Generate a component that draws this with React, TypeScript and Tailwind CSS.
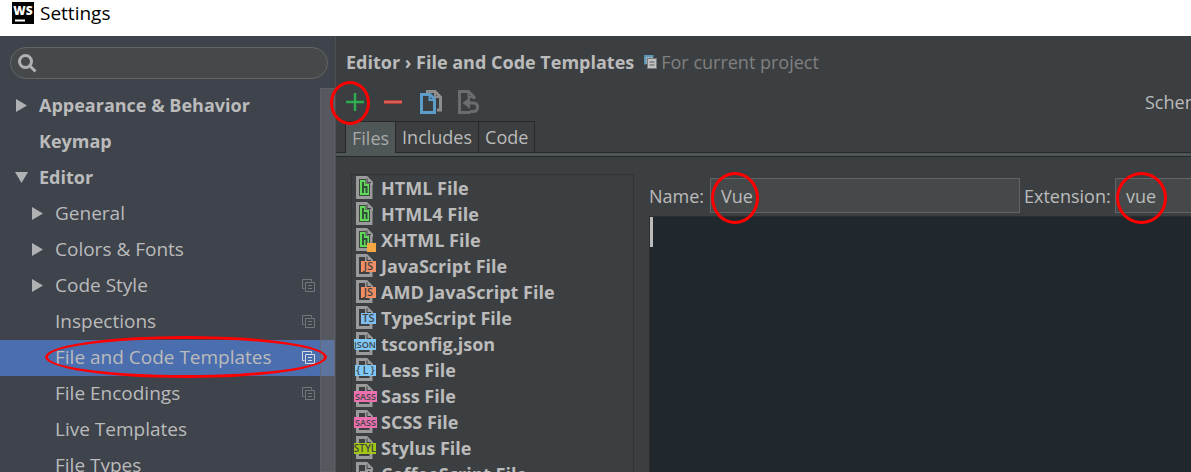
import { useState } from "react";

type Node = {
  label: string;
  top?: boolean;
  open?: boolean;
  branch?: boolean;
  project?: boolean;
};

const nodes: Node[] = [
  { label: "Appearance & Behavior", top: true, branch: true },
  { label: "Keymap", top: true },
  { label: "Editor", top: true, branch: true, open: true },
  { label: "General", branch: true },
  { label: "Colors & Fonts", branch: true },
  { label: "Code Style", branch: true, project: true },
  { label: "Inspections", project: true },
  { label: "File and Code Templates", project: true },
  { label: "File Encodings", project: true },
  { label: "Live Templates" },
  { label: "File Types" },
];

type Kind = "html" | "xhtml" | "js" | "ts" | "json" | "less" | "sass" | "styl" | "coffee";

const files: { name: string; kind: Kind }[] = [
  { name: "HTML File", kind: "html" },
  { name: "HTML4 File", kind: "html" },
  { name: "XHTML File", kind: "xhtml" },
  { name: "JavaScript File", kind: "js" },
  { name: "AMD JavaScript File", kind: "js" },
  { name: "TypeScript File", kind: "ts" },
  { name: "tsconfig.json", kind: "json" },
  { name: "Less File", kind: "less" },
  { name: "Sass File", kind: "sass" },
  { name: "SCSS File", kind: "sass" },
  { name: "Stylus File", kind: "styl" },
  { name: "CoffeeScript File", kind: "coffee" },
];

const badges: Partial<Record<Kind, { text: string; x: number; w: number; fill: string; size: number }>> = {
  js: { text: "JS", x: 7, w: 15, fill: "#f08d62", size: 11 },
  ts: { text: "TS", x: 7, w: 15, fill: "#7ebff0", size: 11 },
  json: { text: "JSON", x: 0, w: 22, fill: "#7fc8f8", size: 9 },
  less: { text: "{ L }", x: 1, w: 21, fill: "#7fc8f8", size: 10 },
  sass: { text: "SASS", x: 0, w: 23, fill: "#ec6fae", size: 9 },
  styl: { text: "STYL", x: 0, w: 22, fill: "#a4c614", size: 10 },
};

function FileIcon({ kind }: { kind: Kind }) {
  const badge = badges[kind];
  return (
    <svg width="23" height="24" viewBox="0 1 23 24" className="shrink-0" aria-hidden="true">
      <path d="M3.5 2.5H12L17 7.5V22.500H3.5Z" fill="none" stroke="#9a9a9a" strokeWidth="3" />
      <path d="M11 1H13L19 7V10H11Z" fill="#9a9a9a" />
      <path d="M13 3.5V7.5H17" fill="none" stroke="#3c3f41" strokeWidth="1" />
      {(kind === "html" || kind === "xhtml") && (
        <>
          <path d="M5 4H12V8.500H16V21H5Z" fill="#3a4a3d" />
          <path d="M6 5H11.500V9H15V20H6Z" fill="#62d85b" />
          <path d="M9 7V18M9 12H12.500V18" fill="none" stroke="#31503a" strokeWidth="2" />
        </>
      )}
      {kind === "xhtml" && <rect x="13" y="16" width="9" height="9" fill="#f4a742" />}
      {kind === "coffee" && <path d="M6 10H14V17H6Z" fill="#9a9a9a" />}
      {badge && (
        <>
          <rect x={badge.x} y="8" width={badge.w} height="11" fill={badge.fill} />
          <text
            x={badge.x + badge.w / 2}
            y="17"
            textAnchor="middle"
            fontSize={badge.size}
            fontWeight="600"
            fill="#3f4547"
            fontFamily="Liberation Sans Narrow, Open Sans, sans-serif"
          >
            {badge.text}
          </text>
        </>
      )}
    </svg>
  );
}

function ProjectIcon({ className }: { className: string }) {
  return (
    <svg width="13" height="13" viewBox="0 0 13 13" className={className} fill="none" stroke="currentColor" aria-hidden="true">
      <path d="M2.500 9.500H.5V.5H9.500V2.500" />
      <path d="M3.500 3.500H12.500V12.500H3.500Z M6 6.500H10 M6 9.500H10" />
    </svg>
  );
}

function Arrow({ open }: { open?: boolean }) {
  return (
    <svg width="13" height="13" viewBox="0 0 13 13" fill="#afb1b3" aria-hidden="true">
      <path d={open ? "M0 1H13L6.500 12Z" : "M1 0L12 6.500L1 13Z"} />
    </svg>
  );
}

function Ring({ className }: { className: string }) {
  return <span aria-hidden="true" className={`pointer-events-none absolute z-10 rounded-[50%] border-3 border-[#ff0000] ${className}`} />;
}

export default function App() {
  const [selected, setSelected] = useState("File and Code Templates");
  const [tab, setTab] = useState("Files");
  const [name, setName] = useState("Vue");
  const [extension, setExtension] = useState("vue");

  return (
    <div className="flex h-screen flex-col overflow-hidden bg-[#3c3f41] font-['Open_Sans',sans-serif] text-[19px] leading-6 text-[#bbbbbb]">
      <header className="flex h-9 shrink-0 items-start gap-1.5 bg-white px-3 text-black">
        <svg width="22" height="22" viewBox="0 0 22 22" className="mt-0.5" aria-hidden="true">
          <rect width="22" height="22" fill="#000" />
          <text x="11" y="13" textAnchor="middle" fontSize="12" fontWeight="800" fill="#fff" fontFamily="Open Sans, sans-serif">WS</text>
          <path d="M3 18.500H13" stroke="#fff" strokeWidth="2" />
        </svg>
        <h1 className="mt-px">Settings</h1>
      </header>

      <div className="flex min-h-0 flex-1">
        <aside className="flex w-84 shrink-0 flex-col border-r border-[#4d4f50] bg-[#3e434c]">
          <label className="mt-[11px] mr-[7px] ml-2.5 flex h-8 shrink-0 items-center rounded-full border border-[#646464] bg-[#45494a] pl-[7px]">
            <svg width="19" height="19" viewBox="0 0 19 19" fill="none" stroke="#afb1b3" strokeWidth="3" aria-hidden="true">
              <circle cx="7.500" cy="7.500" r="6" />
              <path d="M12 12L17.500 17.500" />
            </svg>
            <input type="search" aria-label="Search settings" className="min-w-0 flex-1 bg-transparent px-2 outline-none" />
          </label>
          <nav className="relative mt-[9px] min-h-0 flex-1 overflow-hidden" aria-label="Settings categories">
            {nodes.map((n) => {
              const active = n.label === selected;
              return (
                <button
                  key={n.label}
                  type="button"
                  onClick={() => setSelected(n.label)}
                  className={`relative flex h-9 w-full items-center pr-5 pb-0.5 text-left ${n.top ? "pl-[15px] text-[18px] font-bold" : "pl-[31px]"} ${active ? "bg-[#4b6eaf]" : ""}`}
                >
                  <span className="w-6 shrink-0">{n.branch && <Arrow open={n.open} />}</span>
                  <span className="flex-1 whitespace-nowrap">{n.label}</span>
                  {n.project && <ProjectIcon className={active ? "text-[#d5dbe6]" : "text-[#73777c]"} />}
                  {n.label === "File and Code Templates" && <Ring className="-top-1 right-2 -bottom-0.5 left-[45px]" />}
                </button>
              );
            })}
            <div className="absolute inset-y-0 right-0 w-[15px] border border-[#616469]/60 bg-[#808080]/35" />
          </nav>
        </aside>

        <main className="flex min-w-0 flex-1 flex-col">
          <div className="flex shrink-0 items-center pt-3.5 pl-2.5 text-[18px] whitespace-nowrap">
            <h2 className="font-bold">Editor › File and Code Templates</h2>
            <svg width="13" height="14" viewBox="0 0 13 14" className="ml-2.5" aria-hidden="true">
              <path d="M1 9.500V1H9.500" fill="none" stroke="#5d97b8" strokeWidth="2" />
              <path d="M2 2H9V9H2Z" fill="#9ab2c0" />
              <path d="M3 3H13V14H3Z" fill="#75797b" />
              <path d="M4 4H12V13H4Z" fill="#c1c1c1" />
              <path d="M5.500 7H10.500M5.500 10H10.500" stroke="#55585a" />
            </svg>
            <span className="ml-1 text-[#808080]">For current project</span>
          </div>

          <div className="mt-3.5 flex h-7 shrink-0 items-center pl-2.5">
            <button type="button" aria-label="Add" className="relative mr-5">
              <svg width="18" height="18" viewBox="0 0 18 18" fill="none" strokeWidth="3" aria-hidden="true">
                <path d="M9 0V18M0 9H18" stroke="#267b40" />
                <path d="M9 0V18M0 9H18" stroke="#35ba56" strokeWidth="1.500" />
              </svg>
              <Ring className="-top-3 -right-1.5 -bottom-3.5 -left-4" />
            </button>
            <button type="button" aria-label="Remove" className="mr-[18px]">
              <svg width="18" height="18" viewBox="0 0 18 18" aria-hidden="true">
                <path d="M0 9H18" stroke="#a5403a" strokeWidth="4" />
                <path d="M0 9H18" stroke="#dc5f55" strokeWidth="2" />
              </svg>
            </button>
            <button type="button" aria-label="Copy" className="mr-4">
              <svg width="22" height="24" viewBox="0 0 22 24" fill="none" aria-hidden="true">
                <path d="M6 1.500H15L20.500 7V20H17" stroke="#8e8e8e" strokeWidth="3" />
                <path d="M15 1V7H21" stroke="#8e8e8e" strokeWidth="2" />
                <path d="M1.500 4.500H10L14.500 9V22.500H1.500Z" fill="#3c3f41" stroke="#5c9dc9" strokeWidth="3" />
                <path d="M9.500 5V10H15" stroke="#5c9dc9" strokeWidth="2" />
              </svg>
            </button>
            <button type="button" aria-label="Reset" className="text-[#6a6c6d]">
              <svg width="22" height="24" viewBox="0 0 22 24" fill="none" stroke="currentColor" aria-hidden="true">
                <path d="M12 22.500H1.500V1.500H10.500L16 7V9" strokeWidth="3" />
                <path d="M10.500 1V7H17" strokeWidth="2" />
                <path d="M10 13H15.500C21 13 21 21.500 15.500 21.500H12" strokeWidth="3" />
                <path d="M4.500 13L12 7V19Z" fill="currentColor" stroke="none" />
              </svg>
            </button>
            <span className="ml-auto w-[46px] overflow-hidden text-[18px] whitespace-nowrap">Scheme:</span>
          </div>

          <div className="mt-[5px] flex h-8 shrink-0 items-stretch border-b border-[#282828] pl-[9px] text-[18px]" role="tablist">
            {["Files", "Includes", "Code"].map((t) => (
              <button
                key={t}
                type="button"
                role="tab"
                aria-selected={t === tab}
                onClick={() => setTab(t)}
                className={`-mb-px border-t border-r border-[#282828] px-1.5 first:border-l ${t === tab ? "bg-[#4e5657] text-[#a8a8a8]" : "border-b bg-[#3c3e3f]"}`}
              >
                {t}
              </button>
            ))}
          </div>
          <div className="h-1 shrink-0 border-b border-[#282828] bg-[#4e5657]" />

          <div className="flex min-h-0 flex-1 pt-[17px] pl-[15px]">
            <ul className="w-[283px] shrink-0 overflow-hidden border border-b-0 border-[#313335] pl-0.5 text-[18px] font-bold">
              {files.map((f) => (
                <li key={f.name} className="flex h-[26px] items-center gap-1 whitespace-nowrap">
                  <FileIcon kind={f.kind} />
                  {f.name}
                </li>
              ))}
            </ul>
            <section className="ml-[15px] flex min-w-0 flex-1 flex-col pt-1 text-[18px]">
              <div className="flex h-[35px] shrink-0 items-center">
                <label htmlFor="name" className="w-[61px] shrink-0">Name:</label>
                <span className="relative flex h-full min-w-0 flex-1">
                  <input
                    id="name"
                    value={name}
                    onChange={(e) => setName(e.target.value)}
                    className="w-full min-w-0 border border-[#646464] bg-[#45494a] pl-2.5 outline-none"
                  />
                  <Ring className="-top-1.5 left-px h-[52px] w-12" />
                </span>
                <label htmlFor="extension" className="ml-1 w-[91px] shrink-0">Extension:</label>
                <span className="relative flex h-full w-[76px]">
                  <input
                    id="extension"
                    value={extension}
                    onChange={(e) => setExtension(e.target.value)}
                    className="w-full min-w-0 border border-r-0 border-[#646464] bg-[#45494a] pl-2.5 outline-none"
                  />
                  <Ring className="-top-1.5 left-px h-[52px] w-[51px]" />
                </span>
              </div>
              <div className="mt-[3px] min-h-0 flex-1 border-t border-l border-[#2b2d2f] bg-[#20272d]">
                <div className="h-[30px] w-[3px] bg-[#bbbbbb]" />
              </div>
            </section>
          </div>
        </main>
      </div>
    </div>
  );
}
